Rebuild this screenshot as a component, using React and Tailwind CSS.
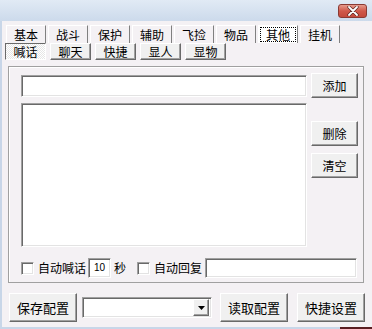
import React from "react";

const raised =
  "bg-[#f0f0f0] border border-t-white border-l-white border-r-[#696969] border-b-[#696969] shadow-[inset_-1px_-1px_0_#a0a0a0]";
const sunken =
  "bg-white border border-t-[#a0a0a0] border-l-[#a0a0a0] border-r-white border-b-white shadow-[inset_1px_1px_0_#696969,inset_-1px_-1px_0_#e3e3e3]";

const topTabs = ["基本", "战斗", "保护", "辅助", "飞捡", "物品", "其他", "挂机"];
const subTabs = ["喊话", "聊天", "快捷", "显人", "显物"];

const Button = ({children, className = ""}) => (
  <div className={`${raised} flex items-center justify-center leading-none ${className}`}>
    {children}
  </div>
);

const Check = () => <div className={`${sunken} w-[13px] h-[13px] shrink-0`} />;

const App = () => {
  return (
    <div className="w-[372px] h-[329px] flex flex-col bg-[#f4f1f4] overflow-hidden text-[12px] text-black font-['Noto_Sans_CJK_SC','Liberation_Sans',sans-serif]">
      {/* Title bar */}
      <div className="h-[21px] shrink-0 flex justify-end items-start pr-[5px] pt-[4px] bg-gradient-to-b from-[#e1eaf5] to-[#ccdaeb]">
        <div className="w-[29px] h-[14px] rounded-[3px] border border-[#8a3a33] bg-gradient-to-b from-[#e59a8c] via-[#d0584a] to-[#c44a3c] flex items-center justify-center">
          <svg width="12" height="10" viewBox="0 0 12 10">
            <path d="M2 1 L10 9 M10 1 L2 9" stroke="#5a2520" strokeWidth="3.2" strokeLinecap="round" />
            <path d="M2 1 L10 9 M10 1 L2 9" stroke="#fff" strokeWidth="1.8" strokeLinecap="round" />
          </svg>
        </div>
      </div>

      {/* Body */}
      <div className="flex-1 flex flex-col border-l-2 border-[#c8d6e8]">
        {/* Tabs row 1 */}
        <div className="flex gap-[2px] pl-[4px] mt-[4px]">
          {topTabs.map((t) => (
            <div
              key={t}
              className={`w-[40px] h-[18px] flex items-center justify-center leading-none border-t border-l border-white border-r border-r-[#808080] ${
                t === "其他" ? "bg-white p-[1px]" : ""
              }`}
            >
              {t === "其他" ? (
                <div className="w-full h-full border border-dotted border-black flex items-center justify-center">
                  {t}
                </div>
              ) : (
                t
              )}
            </div>
          ))}
        </div>

        {/* Tabs row 2 */}
        <div className="flex gap-[4px] pl-[3px]">
          {subTabs.map((t) =>
            t === "喊话" ? (
              <div
                key={t}
                className="w-[41px] h-[17px] flex items-center justify-center leading-none border border-t-[#696969] border-l-[#696969] border-r-white border-b-white bg-[repeating-conic-gradient(#ffffff_0_25%,#e6e6e6_0_50%)] bg-size-[2px_2px]"
              >
                {t}
              </div>
            ) : (
              <Button key={t} className="w-[41px] h-[17px]">
                {t}
              </Button>
            )
          )}
        </div>

        {/* Panel */}
        <div className="ml-[6px] mt-[6px] w-[356px] h-[217px] border border-[#a0a0a0] shadow-[inset_1px_1px_0_#fff] pl-[12px] pt-[6px] flex flex-col">
          <div className="flex gap-[4px]">
            <div className="flex flex-col w-[286px]">
              <div className="h-[25px] flex items-center">
                <div className={`${sunken} w-full h-[22px]`} />
              </div>
              <div className={`${sunken} w-full h-[144px] mt-[5px]`} />
            </div>
            <div className="flex flex-col w-[47px]">
              <Button className="h-[25px]">添加</Button>
              <Button className="h-[25px] mt-[23px]">删除</Button>
              <Button className="h-[25px] mt-[7px]">清空</Button>
            </div>
          </div>

          <div className="flex items-center h-[20px] mt-[11px]">
            <Check />
            <span className="ml-[4px] leading-none">自动喊话</span>
            <div className={`${sunken} w-[23px] h-[20px] ml-[2px] flex items-center justify-center text-[10px] leading-none font-['Liberation_Sans',sans-serif]`}>
              10
            </div>
            <span className="ml-[3px] leading-none">秒</span>
            <div className="ml-[11px]">
              <Check />
            </div>
            <span className="ml-[4px] leading-none">自动回复</span>
            <div className={`${sunken} w-[152px] h-[20px] ml-[3px]`} />
          </div>
        </div>

        {/* Bottom row */}
        <div className="flex items-center ml-[7px] mt-[10px] h-[29px]">
          <Button className="w-[68px] h-[29px] text-[13px]">保存配置</Button>
          <div className={`${sunken} w-[130px] h-[21px] ml-[5px] flex justify-end items-center pr-[2px]`}>
            <div className={`${raised} w-[16px] h-[17px] flex items-center justify-center`}>
              <svg width="7" height="4" viewBox="0 0 7 4">
                <path d="M0 0 H7 L3.5 4 Z" fill="#000" />
              </svg>
            </div>
          </div>
          <Button className="w-[68px] h-[29px] ml-[8px] text-[13px]">读取配置</Button>
          <Button className="w-[68px] h-[29px] ml-[9px] text-[13px]">快捷设置</Button>
        </div>

        <div className="flex-1" />
      </div>

      {/* Bottom frame edge */}
      <div className="h-[2px] shrink-0 flex bg-[#c8d6e8]">
        <div className="flex-1" />
        <div className="w-[32px] bg-[#5a1e22]" />
      </div>
    </div>
  );
};

export default App;
